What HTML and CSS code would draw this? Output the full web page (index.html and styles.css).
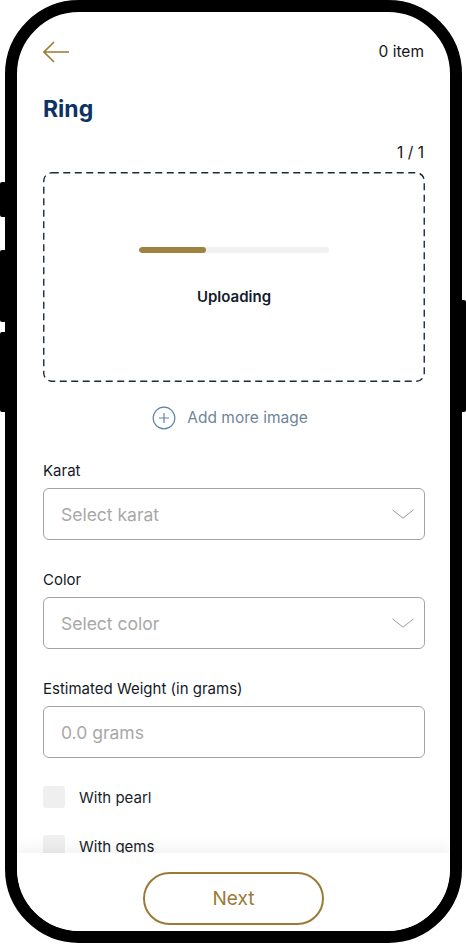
FILE: index.html
```html
<!DOCTYPE html>
<html lang="en">
<head>
<meta charset="utf-8">
<title>Ring</title>
<link rel="stylesheet" href="styles.css">
</head>
<body>
<div class="device">
  <span class="side-btn side-btn--l1"></span>
  <span class="side-btn side-btn--l2"></span>
  <span class="side-btn side-btn--l3"></span>
  <span class="side-btn side-btn--r1"></span>
  <div class="phone">
    <div class="screen">
      <main class="content">
        <header class="topbar">
          <svg class="back" width="26" height="22" viewBox="0 0 26 22" aria-label="Back">
            <path d="M26 11H1M11 1L1 11l10 10" fill="none" stroke="#9b7a36" stroke-width="1.6"/>
          </svg>
          <span class="count">0 item</span>
        </header>
        <h1 class="title">Ring</h1>
        <div class="pager">1 / 1</div>
        <div class="dropzone">
          <div class="progress"><div class="progress__fill"></div></div>
          <div class="uploading">Uploading</div>
        </div>
        <div class="add-more">
          <svg width="24" height="24" viewBox="0 0 24 24">
            <circle cx="12" cy="12" r="10.8" fill="none" stroke="#5d84a6" stroke-width="1.2"/>
            <path d="M12 7v10M7 12h10" stroke="#5d84a6" stroke-width="1.2"/>
          </svg>
          <span>Add more image</span>
        </div>
        <div class="field">
          <label class="field__label">Karat</label>
          <div class="control">
            <span class="placeholder">Select karat</span>
            <svg class="chev" width="22" height="10" viewBox="0 0 22 10"><path d="M0.5 0.8l10.5 8.4 10.5-8.4" fill="none" stroke="#9a9a9a" stroke-width="1"/></svg>
          </div>
        </div>
        <div class="field">
          <label class="field__label">Color</label>
          <div class="control">
            <span class="placeholder">Select color</span>
            <svg class="chev" width="22" height="10" viewBox="0 0 22 10"><path d="M0.5 0.8l10.5 8.4 10.5-8.4" fill="none" stroke="#9a9a9a" stroke-width="1"/></svg>
          </div>
        </div>
        <div class="field">
          <label class="field__label">Estimated Weight (in grams)</label>
          <div class="control">
            <span class="placeholder">0.0 grams</span>
          </div>
        </div>
        <div class="check">
          <span class="check__box"></span>
          <span class="check__text">With pearl</span>
        </div>
        <div class="check">
          <span class="check__box"></span>
          <span class="check__text">With gems</span>
        </div>
      </main>
      <footer class="bottom">
        <button class="next">Next</button>
      </footer>
    </div>
  </div>
</div>
</body>
</html>
```

FILE: styles.css
```css
* { box-sizing: border-box; }
html, body { margin: 0; padding: 0; background: #fff; }
body {
  font-family: Inter, "Noto Sans", "Liberation Sans", sans-serif;
  color: #161b26;
  width: 466px;
  height: 945px;
  overflow: hidden;
}
.device {
  position: relative;
  width: 466px;
  height: 945px;
}
.side-btn {
  position: absolute;
  background: #000;
  width: 6px;
}
.side-btn--l1 { left: 0; top: 182px; height: 35px; border-radius: 2px 0 0 2px; }
.side-btn--l2 { left: 0; top: 250px; height: 72px; border-radius: 2px 0 0 2px; }
.side-btn--l3 { left: 0; top: 332px; height: 80px; border-radius: 2px 0 0 2px; }
.side-btn--r1 { right: 0; top: 300px; height: 112px; width: 6px; border-radius: 0 2px 2px 0; }

.phone {
  position: relative;
  margin-left: 5px;
  width: 457px;
  height: 943px;
  border: 12px solid #000;
  border-radius: 74px;
  background: #fff;
  overflow: hidden;
}
.screen {
  height: 100%;
  display: flex;
  flex-direction: column;
  border-radius: 62px;
  overflow: hidden;
}
.content {
  flex: 1;
  min-height: 0;
  overflow: hidden;
  padding: 30px 25px 0 26px;
  display: flex;
  flex-direction: column;
}
.content > * { flex-shrink: 0; }
.topbar {
  height: 20px;
  display: flex;
  align-items: center;
  justify-content: space-between;
}
.back { display: block; margin-top: -1px; }
.count {
  font-size: 15.5px;
  line-height: 20px;
  color: #161616;
  margin-right: 1px;
}
.title {
  margin: 33px 0 0;
  font-size: 23px;
  line-height: 28px;
  font-weight: 700;
  color: #0d3363;
}
.pager {
  margin-top: 20px;
  text-align: right;
  font-size: 15.5px;
  line-height: 20px;
  color: #161616;
  margin-right: 1px;
}
.dropzone {
  margin-top: 9px;
  height: 210px;
  border-radius: 8px;
  background-image: url("data:image/svg+xml,%3Csvg xmlns='http://www.w3.org/2000/svg' width='100%25' height='100%25'%3E%3Crect x='0.75' y='0.75' width='calc(100%25 - 1.5px)' height='calc(100%25 - 1.5px)' rx='8' ry='8' fill='none' stroke='%231d2a3b' stroke-width='1.4' stroke-dasharray='7 4.5'/%3E%3C/svg%3E");
  display: flex;
  flex-direction: column;
  align-items: center;
  padding-top: 75px;
}
.progress {
  width: 190px;
  height: 6px;
  border-radius: 3px;
  background: #f1f1f1;
  overflow: hidden;
}
.progress__fill {
  width: 67px;
  height: 100%;
  border-radius: 3px;
  background: #a08240;
}
.uploading {
  margin-top: 34px;
  font-size: 15px;
  line-height: 20px;
  font-weight: 600;
  color: #121c2c;
}
.add-more {
  margin-top: 24px;
  height: 24px;
  display: flex;
  align-items: center;
  justify-content: center;
  gap: 11px;
  padding-right: 8px;
  color: #6f8599;
  font-size: 15.5px;
  line-height: 20px;
  font-weight: 400;
}
.add-more svg { display: block; }
.field { margin-top: 31px; display: flex; flex-direction: column; }
.field + .field { margin-top: 30px; }
.field__label {
  font-size: 15px;
  line-height: 20px;
  font-weight: 400;
  color: #131a26;
  margin-bottom: 7px;
}
.control {
  height: 52px;
  border: 1px solid #a3a3a3;
  border-radius: 6px;
  display: flex;
  align-items: center;
  justify-content: space-between;
  padding: 0 10px 0 17px;
}
.placeholder {
  font-size: 17.5px;
  color: #a8a8a8;
  line-height: 24px;
  padding-top: 1px;
}
.chev { display: block; margin-top: 0; }
.check {
  margin-top: 28px;
  height: 22px;
  display: flex;
  align-items: center;
  gap: 14px;
}
.check + .check { margin-top: 27px; }
.check__box {
  width: 22px;
  height: 22px;
  border-radius: 3px;
  background: #efefef;
  flex: none;
}
.check__text {
  font-size: 15px;
  line-height: 20px;
  color: #161d2a;
  padding-top: 1px;
}
.bottom {
  position: relative;
  z-index: 1;
  flex: none;
  height: 78px;
  background: #fff;
  box-shadow: 0 -6px 12px rgba(0, 0, 0, 0.05);
  display: flex;
  justify-content: center;
  padding-top: 19px;
}
.next {
  width: 181px;
  height: 53px;
  border: 2px solid #9b7a36;
  border-radius: 27px;
  background: #fff;
  color: #9b7a36;
  font-family: Inter, "Noto Sans", "Liberation Sans", sans-serif;
  font-size: 19px;
  font-weight: 400;
  padding: 0;
}
```
